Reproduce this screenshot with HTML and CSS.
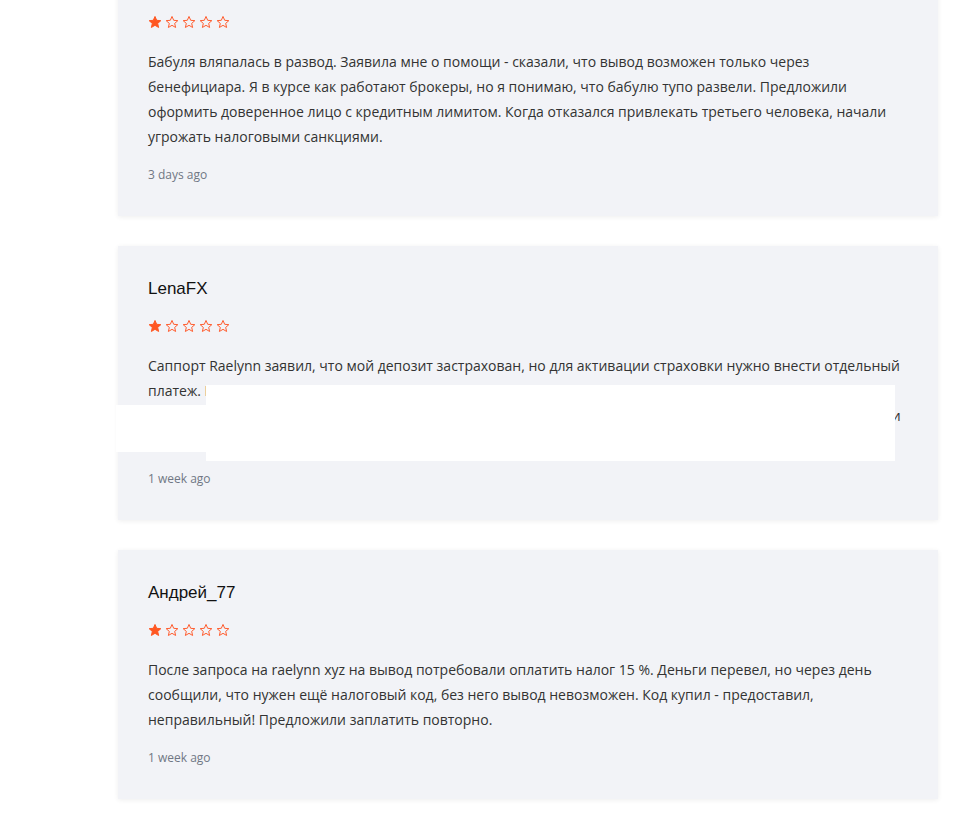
FILE: index.html
```html
<!DOCTYPE html>
<html lang="ru">
<head>
<meta charset="utf-8">
<title>Отзывы</title>
<link rel="stylesheet" href="styles.css">
</head>
<body>
<svg width="0" height="0" class="defs">
  <defs>
    <symbol id="star" viewBox="0 0 24 24">
      <path d="M12 2.5l2.9 6.6 7.1.6-5.4 4.7 1.6 7-6.2-3.7-6.2 3.7 1.6-7L2 9.7l7.1-.6z"/>
    </symbol>
  </defs>
</svg>
<main class="reviews">
  <article class="review review-first">
    <h3 class="review-name">Марина_К</h3>
    <div class="stars">
      <svg class="star full"><use href="#star"/></svg>
      <svg class="star"><use href="#star"/></svg>
      <svg class="star"><use href="#star"/></svg>
      <svg class="star"><use href="#star"/></svg>
      <svg class="star"><use href="#star"/></svg>
    </div>
    <p class="review-text">Бабуля вляпалась в развод. Заявила мне о помощи - сказали, что вывод возможен только через<br>бенефициара. Я в курсе как работают брокеры, но я понимаю, что бабулю тупо развели. Предложили<br>оформить доверенное лицо с кредитным лимитом. Когда отказался привлекать третьего человека, начали<br>угрожать налоговыми санкциями.</p>
    <div class="review-date">3 days ago</div>
  </article>

  <article class="review">
    <h3 class="review-name">LenaFX</h3>
    <div class="stars">
      <svg class="star full"><use href="#star"/></svg>
      <svg class="star"><use href="#star"/></svg>
      <svg class="star"><use href="#star"/></svg>
      <svg class="star"><use href="#star"/></svg>
      <svg class="star"><use href="#star"/></svg>
    </div>
    <p class="review-text">Саппорт Raelynn заявил, что мой депозит застрахован, но для активации страховки нужно внести отдельный<br>платеж. Позже сказали, что нужен ещё сбор за проверку документов и подтверждение личности.<br><span class="nowrap">Внес платеж, но затем сказали, что страховой фонд заблокирован и надо оплатить ещё комиссию за вывод и</span><br>налог на страховку.</p>
    <div class="review-date">1 week ago</div>
    <div class="mask mask-left"></div>
    <div class="mask mask-main"></div>
  </article>

  <article class="review">
    <h3 class="review-name">Андрей_77</h3>
    <div class="stars">
      <svg class="star full"><use href="#star"/></svg>
      <svg class="star"><use href="#star"/></svg>
      <svg class="star"><use href="#star"/></svg>
      <svg class="star"><use href="#star"/></svg>
      <svg class="star"><use href="#star"/></svg>
    </div>
    <p class="review-text">После запроса на raelynn xyz на вывод потребовали оплатить налог 15 %. Деньги перевел, но через день<br>сообщили, что нужен ещё налоговый код, без него вывод невозможен. Код купил - предоставил,<br>неправильный! Предложили заплатить повторно.</p>
    <div class="review-date">1 week ago</div>
  </article>
</main>
</body>
</html>
```

FILE: styles.css
```css
html, body {
  margin: 0;
  padding: 0;
  background: #ffffff;
}

body {
  overflow: hidden;
  height: 817px;
}

.defs {
  position: absolute;
  width: 0;
  height: 0;
}

.reviews {
  display: flex;
  flex-direction: column;
  gap: 30px;
  width: 820px;
  margin-left: 118px;
}

.review {
  position: relative;
  background: #f2f3f7;
  padding: 31px 30px 32px;
  box-shadow: 0 1px 5px rgba(0, 0, 0, 0.07);
}

.review-first {
  margin-top: -58px;
}

.review-name {
  margin: 0;
  font-family: "Liberation Sans", Arial, sans-serif;
  font-weight: 400;
  font-size: 17px;
  line-height: 24px;
  color: #111111;
}

.stars {
  display: flex;
  gap: 3px;
  margin-top: 17px;
  height: 16px;
  align-items: center;
}

.star {
  width: 14px;
  height: 14px;
  fill: none;
  stroke: #ff5a2c;
  stroke-width: 1.7;
  stroke-linejoin: round;
}

.star.full {
  fill: #ff5722;
  stroke: #ff5722;
}

.review-text {
  margin: 19px 0 0;
  font-family: "Open Sans", sans-serif;
  font-size: 14px;
  line-height: 25px;
  color: #333333;
}

.nowrap {
  white-space: nowrap;
}

.review-date {
  margin-top: 17px;
  font-family: "Open Sans", sans-serif;
  font-size: 12px;
  line-height: 18px;
  color: #707784;
}

.mask {
  position: absolute;
  background: #ffffff;
}

.mask-left {
  left: -2px;
  top: 159px;
  width: 90px;
  height: 47px;
}

.mask-main {
  left: 88px;
  top: 139px;
  width: 689px;
  height: 76px;
}
```
